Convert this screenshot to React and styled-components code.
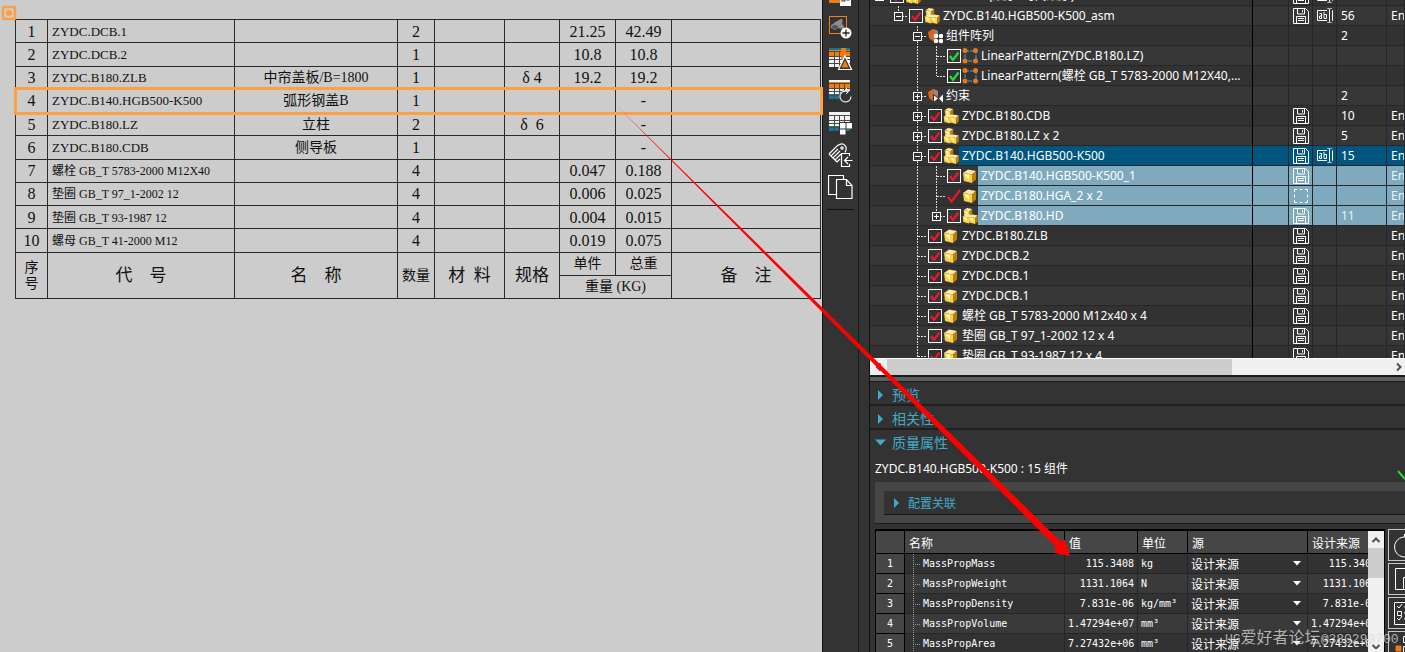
import React, { useState } from "react";
import styled, { createGlobalStyle } from "styled-components";

const GlobalStyle = createGlobalStyle`
  * {
    box-sizing: border-box;
  }

  body {
    margin: 0;
    background-color: #333333;
    font-family: "Noto Sans", "Noto Sans CJK SC", sans-serif;
    font-size: 12px;
    color: #ffffff;
  }

  button,
  input,
  select {
    font: inherit;
    color: inherit;
    margin: 0;
    padding: 0;
    border: 0;
    border-radius: 0;
    background: none;
  }
`;

const Workspace = styled.div`
  position: relative;
  display: flex;
  height: 100vh;
  overflow: hidden;
`;

/* ---------- Drawing sheet ---------- */

const Sheet = styled.main`
  position: relative;
  flex: 1;
  min-width: 0;
  padding: 19px 1px 0 15px;
  background-color: #cccccc;
  color: #111111;
`;

const Marker = styled.svg`
  position: absolute;
  top: 5px;
  left: 1px;
`;

const PartsTable = styled.table`
  width: 100%;
  height: 280px;
  table-layout: fixed;
  border-collapse: collapse;
  font-family: "Liberation Serif", "Noto Sans CJK SC", serif;
  font-size: 16px;
  line-height: 16px;
`;

const PartsRow = styled.tr`
  outline: ${(props) => (props.$marked ? "3px solid #ff9f40" : "none")};
  outline-offset: -1px;
`;

const PartsCell = styled.td`
  padding: 1px 0 0 ${(props) => (props.$left ? "4px" : "0")};
  border: 1px solid #2b2b2b;
  text-align: ${(props) => (props.$left ? "left" : "center")};
  font-size: ${(props) => props.$size || 16}px;
  font-weight: 400;
  white-space: pre;
`;

const PartsHead = styled(PartsCell).attrs({ as: "th" })``;

const PARTS = [
  ["1", "ZYDC.DCB.1", "", "2", "", "21.25", "42.49"],
  ["2", "ZYDC.DCB.2", "", "1", "", "10.8", "10.8"],
  ["3", "ZYDC.B180.ZLB", "中帘盖板/B=1800", "1", "δ 4", "19.2", "19.2"],
  ["4", "ZYDC.B140.HGB500-K500", "弧形钢盖B", "1", "", "", "-"],
  ["5", "ZYDC.B180.LZ", "立柱", "2", "δ  6", "", "-"],
  ["6", "ZYDC.B180.CDB", "侧导板", "1", "", "", "-"],
  ["7", "螺栓 GB_T 5783-2000 M12X40", "", "4", "", "0.047", "0.188"],
  ["8", "垫圈 GB_T 97_1-2002 12", "", "4", "", "0.006", "0.025"],
  ["9", "垫圈 GB_T 93-1987 12", "", "4", "", "0.004", "0.015"],
  ["10", "螺母 GB_T 41-2000 M12", "", "4", "", "0.019", "0.075"],
];

function PartsList() {
  return (
    <PartsTable>
      <colgroup>
        <col width="32" />
        <col width="187" />
        <col width="163" />
        <col width="37" />
        <col width="70" />
        <col width="55" />
        <col width="56" />
        <col width="56" />
        <col />
      </colgroup>
      <tbody>
        {PARTS.map(([no, code, name, qty, spec, unit, total]) => (
          <PartsRow key={no} $marked={no === "4"}>
            <PartsCell>{no}</PartsCell>
            <PartsCell $left $size={code.startsWith("ZYDC") ? 13 : 12}>
              {code}
            </PartsCell>
            <PartsCell $size={14}>{name}</PartsCell>
            <PartsCell>{qty}</PartsCell>
            <PartsCell />
            <PartsCell>{spec}</PartsCell>
            <PartsCell>{unit}</PartsCell>
            <PartsCell>{total}</PartsCell>
            <PartsCell />
          </PartsRow>
        ))}
        <PartsRow>
          <PartsHead rowSpan={2} $size={14}>
            序<br />号
          </PartsHead>
          <PartsHead rowSpan={2} $size={17}>代　号</PartsHead>
          <PartsHead rowSpan={2} $size={17}>名　称</PartsHead>
          <PartsHead rowSpan={2} $size={14}>数量</PartsHead>
          <PartsHead rowSpan={2} $size={17}>{"材  料"}</PartsHead>
          <PartsHead rowSpan={2} $size={17}>规格</PartsHead>
          <PartsHead $size={14}>单件</PartsHead>
          <PartsHead $size={14}>总重</PartsHead>
          <PartsHead rowSpan={2} $size={17}>备　注</PartsHead>
        </PartsRow>
        <PartsRow>
          <PartsHead colSpan={2} $size={14}>重量 (KG)</PartsHead>
        </PartsRow>
      </tbody>
    </PartsTable>
  );
}

/* ---------- Tool strip ---------- */

const Dock = styled.aside`
  flex: 0 0 583px;
  display: flex;
  min-width: 0;
  border-left: 1px solid #111111;
`;

const ToolStrip = styled.nav`
  flex: 0 0 36px;
  display: flex;
  flex-direction: column;
  align-items: center;
  overflow: hidden;
  border-right: 1px solid #1a1a1a;
`;

const ToolButton = styled.button`
  flex: 0 0 32px;
  width: 32px;
  display: grid;
  place-items: center;
`;

const ToolScroll = styled.div`
  margin-top: -21px;
  display: flex;
  flex-direction: column;
`;

const ToolRule = styled.hr`
  width: 27px;
  margin: 6px 0 0;
  border: 0;
  border-top: 1px solid #111111;
`;

function SheetGrid({ top, topFill, bottom }) {
  return (
    <g>
      <rect x="1" y="1" width="21" height="19" fill="#f2f2f2" />
      {top && <rect x="1" y="1" width="21" height="3" fill={top} />}
      {topFill && <rect x="1" y="3" width="21" height="6" fill={topFill} />}
      {bottom && <rect x="1" y="15" width="21" height="5" fill={bottom} />}
      <path
        d="M1 4.5h21M1 9.5h21M1 12.5h21M1 16.5h21M6.5 4v16M11.5 4v16M16.5 4v16"
        stroke="#4a4a4a"
      />
    </g>
  );
}

const TOOLS = [
  {
    label: "Table settings",
    art: (
      <g>
        <SheetGrid top="#ef7d12" />
        <rect x="1" y="13" width="11" height="7" fill="#ef7d12" />
        <rect x="12" y="4" width="11" height="19" fill="#fff" />
        <path d="M14 8h3v3h-3zM14 15h3v3h-3zM18.500 10h3M18.500 17h3" fill="none" stroke="#333" />
      </g>
    ),
  },
  {
    label: "Add component",
    art: (
      <g>
        <rect x="1.500" y="1.500" width="17" height="17" fill="none" stroke="#f08020" />
        <path d="M3 13c-1-4 3-4 4-6l6-3c2-1 2 3 1 5 2 1 3 4 1 5l-5-1-3 2z" fill="#8c8c8c" />
        <ellipse cx="7" cy="12" rx="3" ry="2" fill="#555" />
        <circle cx="18" cy="18" r="5.500" fill="#fff" />
        <path d="M18 14.500v7M14.500 18h7" stroke="#222" strokeWidth="1.300" />
      </g>
    ),
  },
  {
    label: "Sheet delta",
    art: (
      <g>
        <SheetGrid top="#1b7390" topFill="#ef7d12" />
        <rect x="13" y="1" width="5" height="12" fill="#ef7d12" />
        <path d="M17 9l6.500 13.500h-13z" fill="#333" stroke="#fff" strokeWidth="1.200" />
        <path d="M17 13l3.500 7.500h-7z" fill="#ef7d12" />
      </g>
    ),
  },
  {
    label: "Refresh sheet",
    art: (
      <g>
        <SheetGrid topFill="#ef7d12" bottom="#1b7390" />
        <circle cx="17.500" cy="17" r="6" fill="#333" />
        <path d="M20 12.500a5.500 5.500 0 1 0 3 5" fill="none" stroke="#ddd" strokeWidth="1.300" />
        <path d="M15 12h6l-3-3M21 12l-3 3" fill="none" stroke="#fff" />
      </g>
    ),
  },
  {
    label: "Sheet blocks",
    art: (
      <g>
        <SheetGrid bottom="#1b7390" />
        <path d="M11 11h13v7h-6v6h-7z" fill="#333" />
        <path d="M12 12h5.500v5.500h-5.500zM18.500 12h5.500v5.500h-5.500zM12 18.500h5.500v5h-5.500z" fill="#fff" />
      </g>
    ),
  },
  {
    label: "Import tag",
    art: (
      <g fill="none" stroke="#fff" strokeWidth="1.200">
        <path d="M1 11l8.500-8.500c3-2 6-2 7.500 0 2 2 1 5 0 7M1 11l2 2 7-7M3 13l2 2 7-7M5 15l2 2 6-6M7 17l2 2 3-3" />
        <circle cx="14" cy="5" r="1.200" />
        <path d="M21.500 13v-2.500h-8v13h8V21M24.500 17.500h-8M20 14l-3.500 3.500L20 21" />
      </g>
    ),
  },
  {
    label: "Copy pages",
    art: (
      <g fill="none" stroke="#fff" strokeWidth="1.200">
        <path d="M8.500 19.500h-8v-19h15v4" />
        <path d="M8.500 4.500h10l5.500 6v13h-15.500zM18.500 4.500v6h5.500" fill="#333" />
      </g>
    ),
  },
];

/* ---------- Assembly tree ---------- */

const Panel = styled.section`
  flex: 1;
  min-width: 0;
  display: flex;
  flex-direction: column;
  margin-left: 10px;
  border-left: 1px solid #111111;
`;

const TreeView = styled.div`
  flex: 0 0 358px;
  overflow: hidden;
`;

const TreeTable = styled.table`
  width: 100%;
  margin-top: -14px;
  table-layout: fixed;
  border-collapse: separate;
  border-spacing: 0;
`;

const tone = { active: "#00567f", child: "#7fa9bd" };

const TreeRow = styled.tr`
  height: 20px;
  background-color: #323232;

  &:nth-child(even) {
    background-color: #373737;
  }
`;

const TreeCell = styled.td`
  height: 20px;
  padding: 0 0 0 ${(props) => props.$pad || 0}px;
  border-bottom: 1px solid #262626;
  border-right: 1px solid ${(props) => (props.$edge ? "#000000" : "#262626")};
  background-color: ${(props) => tone[props.$tone] || "transparent"};
  color: ${(props) => (props.$tone === "child" ? "#e6f3f8" : "#ffffff")};
  line-height: 18px;
  white-space: nowrap;
  overflow: hidden;

  > svg {
    display: block;
  }
`;

const TreeLine = styled.div`
  display: flex;
  align-items: center;
  height: 19px;
`;

const Branch = styled.svg`
  flex: 0 0 19px;
  height: 20px;
`;

const TreeLabel = styled.span`
  flex: 1;
  min-width: 0;
  height: 19px;
  padding-left: 3px;
  overflow: hidden;
  line-height: 20px;
  background-color: ${(props) => tone[props.$tone] || "transparent"};
`;

const TickBox = styled.span`
  flex: 0 0 16px;
  display: grid;
  justify-content: center;
  align-items: center;

  > * {
    grid-area: 1 / 1;
  }

  svg {
    pointer-events: none;
  }
`;

const TickInput = styled.input`
  appearance: none;
  width: 14px;
  height: 14px;
  border: ${(props) => (props.$bare ? "0" : "1px solid #ffffff")};
`;

function Tick({ label, color, bare }) {
  const [checked, setChecked] = useState(true);

  return (
    <TickBox>
      <TickInput
        type="checkbox"
        aria-label={label}
        checked={checked}
        onChange={() => setChecked(!checked)}
        $bare={bare}
      />
      {checked && (
        <svg width="14" height="14" viewBox="0 0 14 14" fill="none">
          <path
            d={bare ? "M1 8l3.500 4.500L13 1" : "M3 7l3 4 5.500-7.500"}
            stroke={color}
            strokeWidth="2.200"
          />
        </svg>
      )}
    </TickBox>
  );
}

function Cube({ x = 0, y = 0, s = 1 }) {
  return (
    <g transform={`translate(${x} ${y}) scale(${s})`}>
      <path d="M1 5l5-3.500 8 1.500-4 3.500z" fill="#ffe9a0" />
      <path d="M1 5l9 1.500v8.500l-8-2z" fill="#f8d24c" />
      <path d="M2 6l5 1v5z" fill="#fff7c0" />
      <path d="M10 6.500l4-3.500v8.500l-4 3.500z" fill="#b87f0c" />
    </g>
  );
}

const ICONS = {
  part: <Cube />,
  assembly: (
    <g>
      <Cube x={1} y={-1} s={0.66} />
      <Cube x={0} y={5} s={0.7} />
      <Cube x={6} y={5.5} s={0.7} />
    </g>
  ),
  pattern: (
    <g>
      <path d="M1 4l5-3 5 2v6l-5 4-4-3z" fill="#d9661a" />
      <path d="M6 1l5 2v6l-2-1-1-4z" fill="#8d8d8d" />
      <circle cx="9" cy="8" r="2.300" fill="#fff" />
      <circle cx="14" cy="8" r="2.300" fill="#fff" />
      <circle cx="9" cy="13" r="2.300" fill="#fff" />
      <circle cx="14" cy="13" r="2.300" fill="#fff" />
    </g>
  ),
  constraint: (
    <g>
      <path d="M1 4l5-3 5 2v6l-5 4-4-3z" fill="#d9661a" />
      <path d="M6 1l5 2v5l-3-1z" fill="#8d8d8d" />
      <path d="M6.500 6.500l5 4-5 4z" fill="#fff" stroke="#333" />
      <path d="M16 6.500l-4 4 4 4z" fill="#fff" />
    </g>
  ),
  linear: (
    <g>
      <path d="M3 3h11v10h-11z" fill="none" stroke="#22b0f0" strokeDasharray="4 1" />
      <circle cx="3" cy="2.500" r="2.500" fill="#e8761a" />
      <circle cx="13.500" cy="2.500" r="2.500" fill="#e8761a" />
      <circle cx="3" cy="13" r="2.500" fill="#e8761a" />
      <circle cx="13.500" cy="13" r="2.500" fill="#e8761a" />
    </g>
  ),
};

function SaveIcon() {
  return (
    <svg width="16" height="16" viewBox="0 0 16 16" fill="none" stroke="#fff">
      <path d="M.5.5h12l3 3v12H.5zM4.500 1v5h7V1M9.500 2v2.500M3.500 15.500V8.500h9v7M5 10.500h6M5 12.500h6" />
    </svg>
  );
}

function RenameIcon() {
  return (
    <svg width="17" height="16" viewBox="0 0 17 16" fill="none" stroke="#fff">
      <path d="M10 2.500H.5v10H10M15 2.500h.5v10H15M12.500 1v13M10.500.5h1l1 .5 1-.5h1M10.500 14.500h1l1-.5 1 .5h1" />
      <path d="M2.500 5.500h2v5h-2v-2.500h2M7 4v6.500h2.500v-4H7" />
    </svg>
  );
}

function EmptyIcon() {
  return (
    <svg width="16" height="16" viewBox="0 0 16 16" fill="none" stroke="#fff">
      <path d="M1.500 4V1.500H4M6.500 1.500h3M12 1.500h2.500V4M14.500 6.500v3M14.500 12v2.500H12M9.500 14.500h-3M4 14.500H1.500V12M1.500 9.500v-3" />
    </svg>
  );
}

const TREE = [
  { level: 0, box: "-", icon: "assembly", text: "ZYDC.B180 (顺序: 时间顺序)", save: true, rename: true },
  { level: 1, box: "-", icon: "assembly", text: "ZYDC.B140.HGB500-K500_asm", save: true, rename: true, count: "56", ref: "En", last: true },
  { level: 2, box: "-", icon: "pattern", text: "组件阵列", count: "2", plain: true },
  { level: 3, icon: "linear", text: "LinearPattern(ZYDC.B180.LZ)", green: true },
  { level: 3, icon: "linear", text: "LinearPattern(螺栓 GB_T 5783-2000 M12X40,...", green: true, last: true },
  { level: 2, box: "+", icon: "constraint", text: "约束", count: "2", plain: true },
  { level: 2, box: "+", icon: "assembly", text: "ZYDC.B180.CDB", save: true, count: "10", ref: "En" },
  { level: 2, box: "+", icon: "assembly", text: "ZYDC.B180.LZ x 2", save: true, count: "5", ref: "En" },
  { level: 2, box: "-", icon: "assembly", text: "ZYDC.B140.HGB500-K500", save: true, rename: true, count: "15", ref: "En", tone: "active" },
  { level: 3, icon: "part", text: "ZYDC.B140.HGB500-K500_1", save: true, ref: "En", tone: "child" },
  { level: 3, icon: "part", text: "ZYDC.B180.HGA_2 x 2", empty: true, bare: true, ref: "En", tone: "child" },
  { level: 3, box: "+", icon: "assembly", text: "ZYDC.B180.HD", save: true, count: "11", ref: "En", tone: "child", last: true },
  { level: 2, icon: "part", text: "ZYDC.B180.ZLB", save: true, ref: "En" },
  { level: 2, icon: "part", text: "ZYDC.DCB.2", save: true, ref: "En" },
  { level: 2, icon: "part", text: "ZYDC.DCB.1", save: true, ref: "En" },
  { level: 2, icon: "part", text: "ZYDC.DCB.1", save: true, ref: "En" },
  { level: 2, icon: "part", text: "螺栓 GB_T 5783-2000 M12x40 x 4", save: true, ref: "En" },
  { level: 2, icon: "part", text: "垫圈 GB_T 97_1-2002 12 x 4", save: true, ref: "En" },
  { level: 2, icon: "part", text: "垫圈 GB_T 93-1987 12 x 4", save: true, ref: "En" },
];

function TreeNode({ item }) {
  return (
    <TreeLine>
      {/* the second-level guide runs on beside third-level rows */}
      {Array.from({ length: item.level }, (_, i) => (
        <Branch key={i} viewBox="0 0 19 20">
          {i === 2 && <path d="M9.500 0v20" stroke="#ddd" strokeDasharray="2 1" />}
        </Branch>
      ))}
      <Branch viewBox="0 0 19 20">
        {item.level > 0 && (
          <path d={item.last ? "M9.500 0v10" : "M9.500 0v20"} stroke="#ddd" strokeDasharray="2 1" />
        )}
        <path d="M10 10.500h9" stroke="#ddd" strokeDasharray="2 1" />
        {item.box && <rect x="5.500" y="6.500" width="8" height="8" fill="#333" stroke="#fff" />}
        {item.box && <path d="M7 10.500h5" stroke="#fff" />}
        {item.box === "+" && <path d="M9.500 8v5" stroke="#fff" />}
      </Branch>
      {!item.plain && (
        <Tick label={item.text} color={item.green ? "#1fe03a" : "#f0142f"} bare={item.bare} />
      )}
      <svg width="16" height="16" viewBox="0 0 16 16">
        {ICONS[item.icon]}
      </svg>
      <TreeLabel $tone={item.tone}>{item.text}</TreeLabel>
    </TreeLine>
  );
}

function AssemblyTree() {
  return (
    <TreeView>
      <TreeTable>
        <colgroup>
          <col width="383" />
          <col width="36" />
          <col width="24" />
          <col width="24" />
          <col width="50" />
          <col />
        </colgroup>
        <tbody>
          {TREE.map((item, i) => (
            <TreeRow key={i}>
              <TreeCell $edge>
                <TreeNode item={item} />
              </TreeCell>
              <TreeCell $tone={item.tone} />
              <TreeCell $tone={item.tone} $pad={4}>
                {item.save && <SaveIcon />}
                {item.empty && <EmptyIcon />}
              </TreeCell>
              <TreeCell $tone={item.tone} $pad={4}>
                {item.rename && <RenameIcon />}
              </TreeCell>
              <TreeCell $tone={item.tone} $pad={4}>{item.count}</TreeCell>
              <TreeCell $tone={item.tone} $pad={4}>{item.ref}</TreeCell>
            </TreeRow>
          ))}
        </tbody>
      </TreeTable>
    </TreeView>
  );
}

const HScroll = styled.div`
  flex: 0 0 17px;
  display: flex;
  align-items: center;
  border-top: 1px solid #ffffff;
  background-color: #f0f0f0;
`;

const HThumb = styled.div`
  width: 345px;
  height: 100%;
  margin-right: auto;
  background-color: #cdcdcd;
`;

const ScrollButton = styled.button`
  flex: 0 0 17px;
  width: 16px;
  display: grid;
  place-items: center;
`;

const Splitter = styled.div`
  flex: 0 0 7px;
  border-top: 2px solid #1b1b1b;
  border-bottom: 1px solid #1b1b1b;
  background-color: #5e5e5e;
`;

function Chevron({ d }) {
  return (
    <svg width="10" height="10" viewBox="0 0 10 10" fill="none">
      <path d={d} stroke="#505050" strokeWidth="2" />
    </svg>
  );
}

/* ---------- Detail sections ---------- */

const SectionButton = styled.button`
  flex: 0 0 24px;
  width: 100%;
  display: flex;
  align-items: center;
  gap: ${(props) => (props.$open ? 6 : 8)}px;
  padding-top: ${(props) => (props.$open ? 1 : 3)}px;
  padding-left: ${(props) => (props.$open ? 5 : 7)}px;
  border-bottom: ${(props) => (props.$open ? "0" : "2px solid #1f1f1f")};
  font-size: 14px;
  line-height: 19px;
  text-align: left;
  color: #43a9c9;
`;

const Subject = styled.p`
  margin: 0;
  padding: 1px 0 0 5px;
  display: flex;
  justify-content: space-between;
  line-height: 27px;
`;

const ConfigFrame = styled.div`
  margin: 0 0 5px 5px;
  padding: 9px 0 8px 9px;
  border-bottom: 1px solid #1b1b1b;
  background-color: #464646;
`;

const ConfigButton = styled.button`
  width: 100%;
  height: 24px;
  display: flex;
  align-items: center;
  gap: 8px;
  padding-left: 9px;
  border-bottom: 1px solid #161616;
  background-color: #333333;
  color: #43a9c9;
`;

const Properties = styled.div`
  flex: 1;
  min-height: 0;
  display: flex;
  gap: 3px;
  margin-left: 5px;
`;

const GridBox = styled.div`
  flex: 1;
  min-width: 0;
  display: flex;
  border: 1px solid #000000;
  border-width: 2px 1px 0;
`;

const GridClip = styled.div`
  flex: 1;
  min-width: 0;
  overflow: hidden;
`;

const Grid = styled.table`
  width: 505px;
  table-layout: fixed;
  border-collapse: separate;
  border-spacing: 0;
  font-family: "DejaVu Sans Mono", "Noto Sans CJK SC", monospace;
  font-size: 10px;
`;

const GridHead = styled.th`
  height: 23px;
  padding: 2px 0 0 4px;
  border-right: 1px solid #000000;
  border-bottom: 1px solid #000000;
  background-color: #464646;
  font-family: "Noto Sans CJK SC", sans-serif;
  font-size: 12px;
  line-height: 20px;
  font-weight: 400;
  text-align: left;
`;

const GridNumber = styled(GridHead)`
  height: 20px;
  padding: 0;
  line-height: 16px;
  text-align: center;
  font-size: 10px;
  font-family: "DejaVu Sans Mono", monospace;
`;

const GridCell = styled.td`
  padding: 0 3px;
  border-right: 1px solid #262626;
  border-bottom: 1px solid #262626;
  text-align: ${(props) => (props.$right ? "right" : "left")};
  white-space: nowrap;
`;

const GridRow = styled.tr`
  background-color: #323232;

  &:nth-child(even) {
    background-color: #3a3a3a;
  }
`;

const PropName = styled.div`
  display: flex;
  align-items: center;
  height: 19px;
  gap: 3px;
  padding-left: 5px;
`;

const SourceField = styled.div`
  position: relative;
  display: flex;
  align-items: center;

  svg {
    position: absolute;
    right: 3px;
    pointer-events: none;
  }
`;

const SourceSelect = styled.select`
  flex: 1;
  height: 18px;
  appearance: none;
  font-family: "Noto Sans CJK SC", sans-serif;
  font-size: 12px;
  line-height: 18px;
`;

const VScroll = styled.div`
  flex: 0 0 16px;
  display: flex;
  flex-direction: column;
  justify-content: space-between;
  background-color: #f0f0f0;
`;

const VThumb = styled.div`
  flex: 0 0 30px;
  margin-bottom: auto;
  background-color: #cdcdcd;
`;

const SideButtons = styled.div`
  flex: 0 0 17px;
  display: flex;
  flex-direction: column;
  gap: 2px;
  overflow: hidden;
`;

const SideButton = styled.button`
  flex: 0 0 32px;
  width: 32px;
  border: 1px solid #c8c8c8;

  svg {
    display: block;
  }
`;

const PROPS = [
  ["MassPropMass", "115.3408", "kg"],
  ["MassPropWeight", "1131.1064", "N"],
  ["MassPropDensity", "7.831e-06", "kg/mm³"],
  ["MassPropVolume", "1.47294e+07", "mm³"],
  ["MassPropArea", "7.27432e+06", "mm³"],
];

const SIDE_ICONS = [
  <path d="M15.500 4v3M15.500 7a10 10 0 1 0 .1 0M22 9l2-2" />,
  <path d="M6.500 4.500h15v21h-15zM14.500 13.500h14v12h-14z" />,
  <path d="M5.500 4.500h22v22h-22zM8 8l2 2 3-4M8 20l2 2 3-4M8.500 13.500h4v4h-4zM15 9h8M15 15h8M15 21h8" />,
  <g>
    <path d="M14.500 4.500h6v6h-6zM14.500 14.500h6v6h-6z" />
    <path d="M7 14h5v5h-5z" fill="#ef7d12" stroke="#ef7d12" />
  </g>,
];

function MassProperties() {
  return (
    <Properties>
      <GridBox>
        <GridClip>
          <Grid>
            <colgroup>
              <col width="29" />
              <col width="160" />
              <col width="73" />
              <col width="50" />
              <col width="120" />
              <col width="73" />
            </colgroup>
            <thead>
              <tr>
                <GridHead />
                <GridHead>名称</GridHead>
                <GridHead>值</GridHead>
                <GridHead>单位</GridHead>
                <GridHead>源</GridHead>
                <GridHead>设计来源</GridHead>
              </tr>
            </thead>
            <tbody>
              {PROPS.map(([name, value, unit], i) => (
                <GridRow key={name}>
                  <GridNumber scope="row">{i + 1}</GridNumber>
                  <GridCell>
                    <PropName>
                      <svg width="7" height="20" viewBox="0 0 7 20">
                        <path d="M.5 0v20M2 10.500h5" stroke="#999" strokeDasharray="1 1" />
                      </svg>
                      {name}
                    </PropName>
                  </GridCell>
                  <GridCell $right>{value}</GridCell>
                  <GridCell>{unit}</GridCell>
                  <GridCell>
                    <SourceField>
                      <SourceSelect aria-label={`${name} 源`} defaultValue="设计来源">
                        <option>设计来源</option>
                      </SourceSelect>
                      <svg width="8" height="5" viewBox="0 0 8 5">
                        <path d="M0 0h8l-4 4.500z" fill="#fff" />
                      </svg>
                    </SourceField>
                  </GridCell>
                  <GridCell $right>{value}</GridCell>
                </GridRow>
              ))}
            </tbody>
          </Grid>
        </GridClip>
        <VScroll>
          <ScrollButton aria-label="Up">
            <Chevron d="M1.500 7L5 3.500 8.500 7" />
          </ScrollButton>
          <VThumb />
          <ScrollButton aria-label="Down">
            <Chevron d="M1.500 6L5 9.500 8.500 6" />
          </ScrollButton>
        </VScroll>
      </GridBox>
      <SideButtons>
        {SIDE_ICONS.map((art, i) => (
          <SideButton key={i} aria-label={`Action ${i + 1}`}>
            <svg width="30" height="30" viewBox="0 0 30 30" fill="none" stroke="#fff">
              {art}
            </svg>
          </SideButton>
        ))}
      </SideButtons>
    </Properties>
  );
}

function Caret({ open }) {
  return open ? (
    <svg width="11" height="7" viewBox="0 0 11 7">
      <path d="M0 .5h11L5.500 6.500z" fill="#43a9c9" />
    </svg>
  ) : (
    <svg width="7" height="10" viewBox="0 0 7 10">
      <path d="M1 0l5 5-5 5z" fill="#43a9c9" />
    </svg>
  );
}

/* ---------- Annotations ---------- */

const Pointer = styled.svg`
  position: absolute;
  top: 0;
  left: 0;
  pointer-events: none;
`;

const Watermark = styled.div`
  position: absolute;
  left: 1225px;
  bottom: 2px;
  font-size: 16px;
  line-height: 20px;
  white-space: nowrap;
  color: rgba(220, 220, 220, 0.75);
  pointer-events: none;

  span {
    font-family: "Liberation Mono", monospace;
    font-size: 13px;
  }
`;

function App() {
  return (
    <Workspace>
      <GlobalStyle />
      <Sheet>
        <Marker width="16" height="16" viewBox="0 0 16 16">
          <rect x="2" y="2" width="12" height="12" rx="1" fill="none" stroke="#ff9f40" strokeWidth="2.500" />
          <circle cx="8" cy="8" r="3" fill="#ff9f40" />
        </Marker>
        <PartsList />
      </Sheet>
      <Dock>
        <ToolStrip>
          <ToolScroll>
            {TOOLS.map((tool) => (
              <ToolButton key={tool.label} aria-label={tool.label}>
                <svg width="25" height="25" viewBox="0 0 25 25">
                  {tool.art}
                </svg>
              </ToolButton>
            ))}
          </ToolScroll>
          <ToolRule />
        </ToolStrip>
        <Panel>
          <AssemblyTree />
          <HScroll>
            <ScrollButton aria-label="Left">
              <Chevron d="M6.500 1.500L3 5l3.500 3.500" />
            </ScrollButton>
            <HThumb />
            <ScrollButton aria-label="Right">
              <Chevron d="M5 1.500L8.500 5 5 8.500" />
            </ScrollButton>
          </HScroll>
          <Splitter />
          <SectionButton>
            <Caret />
            预览
          </SectionButton>
          <SectionButton>
            <Caret />
            相关性
          </SectionButton>
          <SectionButton $open>
            <Caret open />
            质量属性
          </SectionButton>
          <Subject>
            ZYDC.B140.HGB500-K500 : 15 组件
            <svg width="8" height="27" viewBox="0 0 8 27">
              <path d="M1 16l7 8" stroke="#1fe03a" strokeWidth="2" />
            </svg>
          </Subject>
          <ConfigFrame>
            <ConfigButton>
              <Caret />
              配置关联
            </ConfigButton>
          </ConfigFrame>
          <MassProperties />
        </Panel>
      </Dock>
      <Pointer width="1100" height="600" viewBox="0 0 1100 600">
        <path d="M617 106L1056 547L1054 553L1070 556L1065 540L1060 541Z" fill="#ff0000" />
      </Pointer>
      <Watermark>
        <span>UG</span>爱好者论坛<span>@380290700</span>
      </Watermark>
    </Workspace>
  );
}

export default App;
